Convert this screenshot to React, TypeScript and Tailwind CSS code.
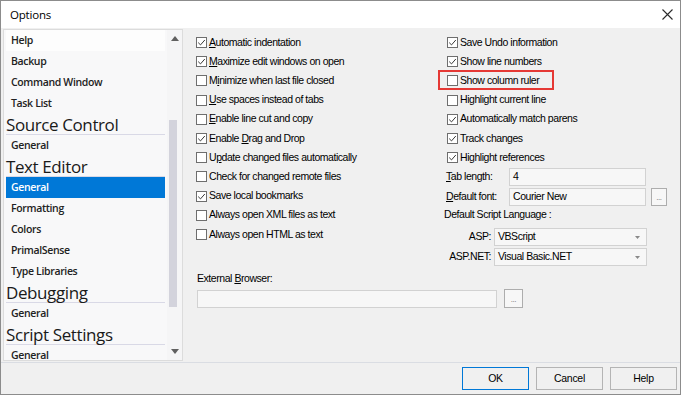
import React from "react";

type Item = { t: string; kind: "h" | "i" | "sel" | "hov" };
const items: Item[] = [
  { t: "Help", kind: "hov" },
  { t: "Backup", kind: "i" },
  { t: "Command Window", kind: "i" },
  { t: "Task List", kind: "i" },
  { t: "Source Control", kind: "h" },
  { t: "General", kind: "i" },
  { t: "Text Editor", kind: "h" },
  { t: "General", kind: "sel" },
  { t: "Formatting", kind: "i" },
  { t: "Colors", kind: "i" },
  { t: "PrimalSense", kind: "i" },
  { t: "Type Libraries", kind: "i" },
  { t: "Debugging", kind: "h" },
  { t: "General", kind: "i" },
  { t: "Script Settings", kind: "h" },
  { t: "General", kind: "i" },
];

const U = ({ children }: { children: React.ReactNode }) => (
  <span className="underline underline-offset-[1px]">{children}</span>
);

const Check = ({ checked }: { checked: boolean }) => (
  <span className="w-[11px] h-[11px] border border-[#6e6e6e] bg-white flex items-center justify-center shrink-0">
    {checked && (
      <svg width="9" height="9" viewBox="0 0 9 9">
        <path d="M1.2 4.6 L3.5 6.9 L7.8 2" stroke="#3a3a3a" strokeWidth="1" fill="none" />
      </svg>
    )}
  </span>
);

const Row = ({ checked, children, hl }: { checked: boolean; children: React.ReactNode; hl?: boolean }) => (
  <div className="relative h-[19.2px] flex items-center gap-[2px]">
    <Check checked={checked} />
    <span className="whitespace-nowrap">{children}</span>
    {hl && <span className="absolute left-[-9px] top-[-1px] w-[116px] h-[20px] border-2 border-[#e53935]" />}
  </div>
);

const Arrow = ({ up }: { up?: boolean }) => (
  <svg width="8" height="5" viewBox="0 0 8 5">
    {up ? <path d="M0 5 L4 0 L8 5 Z" fill="#606060" /> : <path d="M0 0 L8 0 L4 5 Z" fill="#606060" />}
  </svg>
);

const Field = ({ value, w }: { value?: string; w: string }) => (
  <div className={`h-[18px] ${w} border border-[#d2d2d2] bg-[#f7f7f7] flex items-center pl-[3px]`}>{value}</div>
);

const Select = ({ value }: { value: string }) => (
  <div className="h-[18px] w-[153px] border border-[#d2d2d2] bg-[#f7f7f7] flex items-center justify-between pl-[3px] pr-[6px]">
    <span>{value}</span>
    <svg width="5" height="3" viewBox="0 0 5 3">
      <path d="M0 0 L5 0 L2.5 3 Z" fill="#8a8a8a" />
    </svg>
  </div>
);

const Dots = ({ cls }: { cls: string }) => (
  <div className={`${cls} border border-[#adadad] bg-[#f7f7f7] flex items-end justify-center pb-[3px] text-[8px] leading-none text-[#707070]`}>
    ...
  </div>
);

export default function App() {
  return (
    <div className="w-[681px] h-[395px] border border-[#8c8c8c] bg-[#f0f0f0] flex flex-col overflow-hidden">
      {/* Title bar */}
      <div className="h-[27px] bg-white flex items-center justify-between pl-[9px] pr-[7px] shrink-0">
        <span className="font-['Open_Sans',sans-serif] text-[11.5px] tracking-[-0.2px] text-black">Options</span>
        <svg width="11" height="11" viewBox="0 0 11 11">
          <path d="M0.5 0.5 L10.5 10.5 M10.5 0.5 L0.5 10.5" stroke="#2b2b2b" strokeWidth="1.1" />
        </svg>
      </div>

      {/* Body */}
      <div className="h-[334px] flex shrink-0">
        {/* Left list */}
        <div className="mt-[1px] ml-[2px] w-[180px] h-[332px] border border-[#dcdcdc] bg-[#f8f8f9] flex overflow-hidden shrink-0">
          <div className="flex-1 flex flex-col px-[2px] overflow-hidden font-['Open_Sans',sans-serif]">
            {items.map((it, i) => {
              if (it.kind === "h")
                return (
                  <div
                    key={i}
                    className="h-[21px] shrink-0 border-b border-[#d9d9e6] flex items-center text-[17px] leading-none tracking-[-0.4px] text-[#1a1a1a] whitespace-nowrap"
                  >
                    {it.t}
                  </div>
                );
              const sel = it.kind === "sel";
              return (
                <div
                  key={i}
                  className={`h-[21px] shrink-0 flex items-center pl-[5px] text-[10.5px] font-semibold tracking-[-0.35px] whitespace-nowrap ${
                    sel ? "bg-[#0078d7] text-white" : it.kind === "hov" ? "bg-[#fdfdfd] text-[#222]" : "text-[#222]"
                  }`}
                >
                  {it.t}
                </div>
              );
            })}
          </div>
          {/* Scrollbar */}
          <div className="w-[15px] bg-[#f5f5f6] flex flex-col shrink-0">
            <div className="h-[17px] flex items-center justify-center">
              <Arrow up />
            </div>
            <div className="flex-1">
              <div className="mt-[73px] ml-[2px] w-[8px] h-[187px] bg-[#d3d3dc]" />
            </div>
            <div className="h-[17px] flex items-center justify-center">
              <Arrow />
            </div>
          </div>
        </div>

        {/* Right panel */}
        <div className="flex-1 flex flex-col pl-[13px] pt-[5px] font-['Liberation_Sans',Arial,sans-serif] text-[10.5px] tracking-[-0.45px] text-black">
          <div className="flex">
            <div className="w-[251px] flex flex-col shrink-0">
              <Row checked><U>A</U>utomatic indentation</Row>
              <Row checked><U>M</U>aximize edit windows on open</Row>
              <Row checked={false}>M<U>i</U>nimize when last file closed</Row>
              <Row checked={false}><U>U</U>se spaces instead of tabs</Row>
              <Row checked={false}><U>E</U>nable line cut and copy</Row>
              <Row checked>Enable <U>D</U>rag and Drop</Row>
              <Row checked={false}>U<U>p</U>date changed files automatically</Row>
              <Row checked={false}>Check for changed remote files</Row>
              <Row checked>Save local bookmarks</Row>
              <Row checked={false}>Always open XML files as text</Row>
              <Row checked={false}>Always open HTML as text</Row>
            </div>
            <div className="flex flex-col">
              <Row checked>Save Undo information</Row>
              <Row checked>Show line numbers</Row>
              <Row checked={false} hl>Show column ruler</Row>
              <Row checked={false}>Highlight current line</Row>
              <Row checked>Automatically match parens</Row>
              <Row checked>Track changes</Row>
              <Row checked>Highlight references</Row>
              <div className="mt-[1px] flex items-center">
                <span className="w-[63px] -ml-[1px] pr-[1px]"><U>T</U>ab length:</span>
                <Field value="4" w="w-[137px]" />
              </div>
              <div className="mt-[2px] flex items-center">
                <span className="w-[63px] -ml-[1px] pr-[1px]"><U>D</U>efault font:</span>
                <Field value="Courier New" w="w-[137px]" />
                <Dots cls="ml-[5px] w-[16px] h-[18px]" />
              </div>
              <div className="h-[17px] -ml-[3px] flex items-center">
                <span>Default Script Language :</span>
              </div>
              <div className="mt-[5px] -ml-[3px] flex items-center">
                <span className="w-[50px] text-right pr-[3px]">ASP:</span>
                <Select value="VBScript" />
              </div>
              <div className="mt-[2px] -ml-[3px] flex items-center">
                <span className="w-[50px] text-right pr-[3px]">ASP.NET:</span>
                <Select value="Visual Basic.NET" />
              </div>
            </div>
          </div>
          <div className="mt-[5px] ml-[1px] h-[16px] flex items-center">
            <span>External <U>B</U>rowser:</span>
          </div>
          <div className="mt-[2px] ml-[1px] flex items-center">
            <Field w="w-[300px]" />
            <Dots cls="ml-[7px] w-[19px] h-[19px]" />
          </div>
        </div>
      </div>

      {/* Bottom bar */}
      <div className="flex-1 border-t border-[#dadde3] flex justify-end items-start pt-[4px] pr-[3px] gap-[7px] font-['Liberation_Sans',Arial,sans-serif] text-[10.5px] tracking-[-0.3px] text-black">
        <div className="w-[67px] h-[23px] border border-[#0078d7] bg-[#f0f0f0] flex items-center justify-center">OK</div>
        <div className="w-[67px] h-[23px] border border-[#b4b4b4] bg-[#f0f0f0] flex items-center justify-center">Cancel</div>
        <div className="w-[67px] h-[23px] border border-[#b4b4b4] bg-[#f0f0f0] flex items-center justify-center">Help</div>
      </div>
    </div>
  );
}
